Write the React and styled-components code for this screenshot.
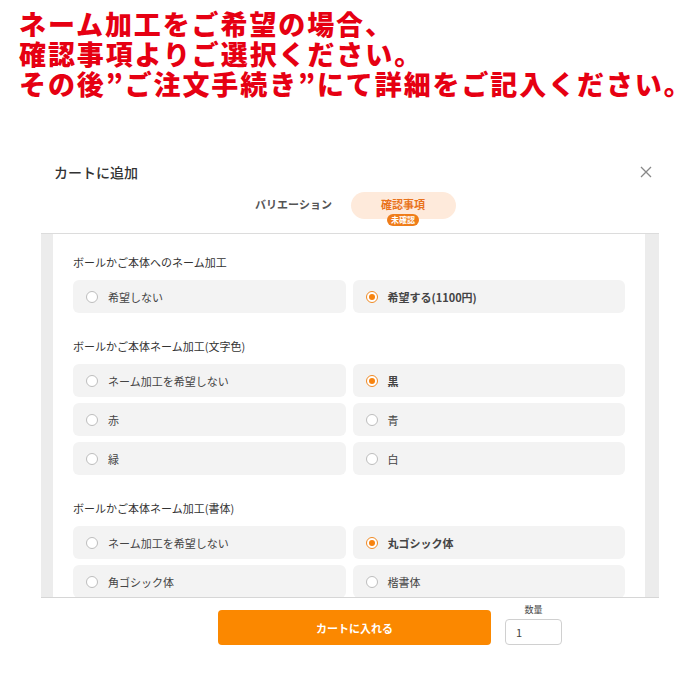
import React from "react";
import styled, { createGlobalStyle } from "styled-components";

const Global = createGlobalStyle`
  html, body { margin: 0; padding: 0; background: #fff; }
  body { font-family: "Noto Sans CJK JP", "Noto Sans", sans-serif; color: #333; }
  * { box-sizing: border-box; }
`;

const Page = styled.div`
  width: 700px;
  height: 700px;
  overflow: hidden;
  display: flex;
  flex-direction: column;
`;

const Notice = styled.div`
  padding: 9px 0 0 19px;
  font-family: "Noto Sans CJK JP", sans-serif;
  font-weight: 900;
  font-size: 27px;
  line-height: 30px;
  letter-spacing: 1.9px;
  color: #e60012;
  white-space: nowrap;
`;

const Modal = styled.div`
  margin: 61px 0 0 41px;
  width: 618px;
  display: flex;
  flex-direction: column;
`;

const ModalHead = styled.div`
  display: flex;
  align-items: center;
  justify-content: space-between;
  padding: 0 7px 0 13px;
  height: 24px;
`;

const Title = styled.div`
  font-size: 14px;
  font-weight: 500;
  color: #333;
`;

const Close = styled.button`
  border: 0;
  background: none;
  padding: 0;
  width: 12px;
  height: 12px;
  display: flex;
  cursor: pointer;
`;

const Tabs = styled.div`
  display: flex;
  justify-content: center;
  gap: 2px;
  margin-top: 8px;
  padding-right: 6px;
  height: 41px;
`;

const Tab = styled.div`
  position: relative;
  width: ${(p) => (p.$active ? "105px" : "110px")};
  height: 27px;
  border-radius: 14px;
  display: flex;
  align-items: center;
  justify-content: center;
  font-size: 11px;
  font-weight: 700;
  background: ${(p) => (p.$active ? "#feeadb" : "transparent")};
  color: ${(p) => (p.$active ? "#e9731c" : "#555")};
  padding-bottom: 3px;
`;

const Badge = styled.span`
  position: absolute;
  left: 50%;
  top: 22px;
  transform: translateX(-50%);
  background: #ef7d1a;
  color: #fff;
  font-size: 8px;
  font-weight: 700;
  line-height: 12px;
  padding: 0 4px;
  border-radius: 6px;
  white-space: nowrap;
`;

const Frame = styled.div`
  border-top: 1px solid #dcdcdc;
  border-bottom: 1px solid #d6d6d6;
  background: #ececec;
  padding: 0 14px 0 12px;
  height: 365px;
  overflow: hidden;
`;

const Scroll = styled.div`
  background: #fff;
  height: 100%;
  overflow: hidden;
  padding: 20px 20px 0 20px;
`;

const Section = styled.div`
  margin-bottom: 25px;
`;

const Label = styled.div`
  font-size: 11px;
  line-height: 16px;
  color: #333;
  margin-bottom: 10px;
`;

const Grid = styled.div`
  display: grid;
  grid-template-columns: 1fr 1fr;
  gap: 6px 7px;
`;

const Option = styled.label`
  display: flex;
  align-items: center;
  gap: 10px;
  height: 33px;
  padding: 0 13px;
  border-radius: 6px;
  background: #f3f3f3;
  font-size: 11px;
  color: #444;
  font-weight: ${(p) => (p.$checked ? 700 : 400)};
`;

const Radio = styled.span`
  width: 12px;
  height: 12px;
  border-radius: 50%;
  border: 1px solid ${(p) => (p.$checked ? "#f08a24" : "#bdbdbd")};
  background: #fff;
  display: flex;
  align-items: center;
  justify-content: center;
  flex: none;
  &::after {
    content: "";
    width: 6px;
    height: 6px;
    border-radius: 50%;
    background: ${(p) => (p.$checked ? "#f7830f" : "transparent")};
  }
`;

const Footer = styled.div`
  display: flex;
  align-items: flex-start;
  gap: 14px;
  padding-left: 177px;
  margin-top: 5px;
`;

const CartButton = styled.button`
  margin-top: 7px;
  width: 273px;
  height: 35px;
  border: 0;
  border-radius: 4px;
  background: #fb8800;
  color: #fff;
  font-family: inherit;
  font-size: 11px;
  font-weight: 700;
`;

const Qty = styled.div`
  display: flex;
  flex-direction: column;
  align-items: center;
  gap: 3px;
`;

const QtyLabel = styled.div`
  font-size: 9px;
  line-height: 13px;
  color: #444;
`;

const QtyInput = styled.div`
  width: 57px;
  height: 26px;
  border: 1px solid #d0d0d0;
  border-radius: 4px;
  font-size: 11px;
  color: #444;
  display: flex;
  align-items: center;
  padding-left: 10px;
`;

const sections = [
  {
    label: "ボールかご本体へのネーム加工",
    options: ["希望しない", "希望する(1100円)"],
    checked: 1,
  },
  {
    label: "ボールかご本体ネーム加工(文字色)",
    options: ["ネーム加工を希望しない", "黒", "赤", "青", "緑", "白"],
    checked: 1,
  },
  {
    label: "ボールかご本体ネーム加工(書体)",
    options: ["ネーム加工を希望しない", "丸ゴシック体", "角ゴシック体", "楷書体"],
    checked: 1,
  },
];

export default function App() {
  return (
    <>
      <Global />
      <Page>
        <Notice>
          ネーム加工をご希望の場合、
          <br />
          確認事項よりご選択ください。
          <br />
          その後”ご注文手続き”にて詳細をご記入ください。
        </Notice>
        <Modal>
          <ModalHead>
            <Title>カートに追加</Title>
            <Close aria-label="close">
              <svg width="12" height="12" viewBox="0 0 12 12">
                <path d="M1 1L11 11M11 1L1 11" stroke="#888" strokeWidth="1.3" />
              </svg>
            </Close>
          </ModalHead>
          <Tabs>
            <Tab>バリエーション</Tab>
            <Tab $active>
              確認事項
              <Badge>未確認</Badge>
            </Tab>
          </Tabs>
          <Frame>
            <Scroll>
              {sections.map((s) => (
                <Section key={s.label}>
                  <Label>{s.label}</Label>
                  <Grid>
                    {s.options.map((o, i) => (
                      <Option key={o} $checked={i === s.checked}>
                        <Radio $checked={i === s.checked} />
                        {o}
                      </Option>
                    ))}
                  </Grid>
                </Section>
              ))}
            </Scroll>
          </Frame>
          <Footer>
            <CartButton>カートに入れる</CartButton>
            <Qty>
              <QtyLabel>数量</QtyLabel>
              <QtyInput>1</QtyInput>
            </Qty>
          </Footer>
        </Modal>
      </Page>
    </>
  );
}
